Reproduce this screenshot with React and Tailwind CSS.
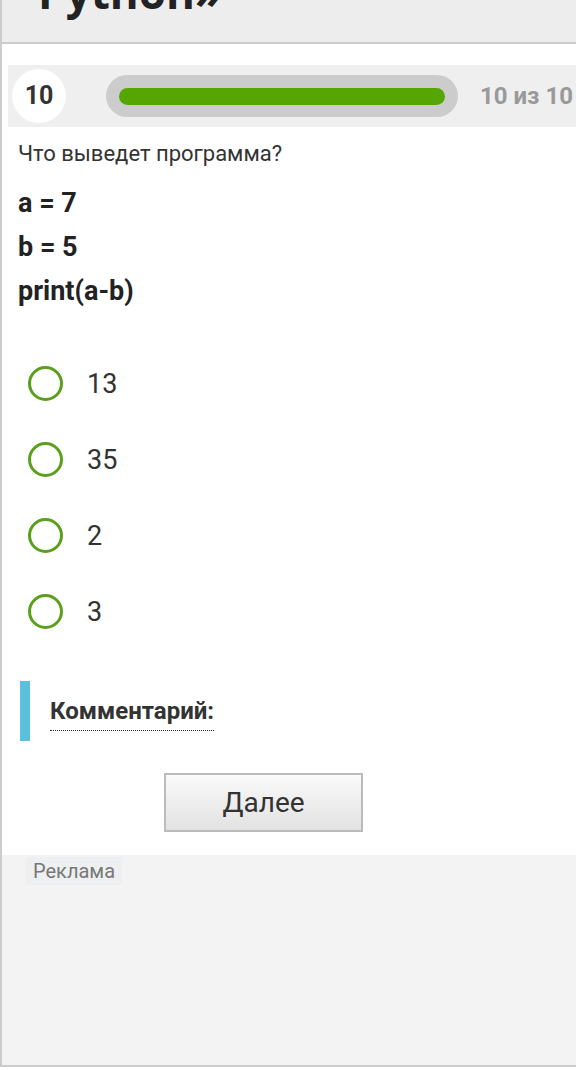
export default function App() {
  const options = ["13", "35", "2", "3"];
  return (
    <div className="w-[576px] bg-white" style={{ fontFamily: "Roboto, 'Liberation Sans', sans-serif" }}>
      <div className="border-l-2 border-[#cccccc] flex flex-col">
        <div className="h-[44px] bg-[#ededed] border-b-2 border-[#cccccc] overflow-hidden">
          <div
            className="pl-[36px] mt-[-30px] text-[44px] leading-[44px] font-bold text-[#222] whitespace-nowrap"
            style={{ fontFamily: "'Open Sans', sans-serif" }}
          >
            Python»
          </div>
        </div>

        <div className="mt-[21px] ml-[6px] h-[62px] bg-[#efefef] flex items-center overflow-hidden">
          <div className="ml-[4px] w-[54px] h-[54px] shrink-0 rounded-full bg-white flex items-center justify-center text-[25px] font-bold text-[#333]">
            10
          </div>
          <div className="ml-[40px] w-[352px] h-[42px] shrink-0 rounded-full bg-[#cccccc] px-[13px] flex items-center">
            <div className="h-[17px] flex-1 rounded-full bg-[#55a600]" />
          </div>
          <div className="ml-[22px] text-[24px] font-bold text-[#999999] whitespace-nowrap">10 из 10</div>
        </div>

        <div className="pl-[16px] mt-[13px] text-[22px] leading-[28px] text-[#333]">Что выведет программа?</div>

        <div className="pl-[16px] mt-[13px] text-[27px] leading-[44px] font-bold text-[#222]">
          <div>a = 7</div>
          <div>b = 5</div>
          <div>print(a-b)</div>
        </div>

        <div className="mt-[32px] flex flex-col">
          {options.map((o) => (
            <div key={o} className="h-[76px] flex items-center pl-[26px]">
              <div className="w-[35px] h-[35px] rounded-full border-[3px] border-[#5a9f1e] shrink-0" />
              <div className="ml-[24px] text-[27px] text-[#333] mt-[2px]">{o}</div>
            </div>
          ))}
        </div>

        <div className="mt-[32px] ml-[18px] h-[60px] border-l-[10px] border-[#5bc0de] flex items-center pl-[20px]">
          <span className="text-[24px] font-bold text-[#333] leading-[28px] border-b border-dotted border-[#333] pb-[5px] mt-[6px]">
            Комментарий:
          </span>
        </div>

        <div className="mt-[32px] ml-[162px]">
          <button className="w-[199px] h-[59px] border-2 border-[#bbbbbb] bg-gradient-to-b from-[#fafafa] to-[#e2e2e2] text-[28px] text-[#333]">
            Далее
          </button>
        </div>

        <div className="mt-[23px] h-[212px] bg-[#f3f3f3] border-b-2 border-[#cccccc]">
          <div className="ml-[24px] mt-[2px] w-[96px] h-[28px] bg-[#eeeff1] flex items-center justify-center text-[20px] text-[#777]">
            Реклама
          </div>
        </div>
      </div>
    </div>
  );
}
